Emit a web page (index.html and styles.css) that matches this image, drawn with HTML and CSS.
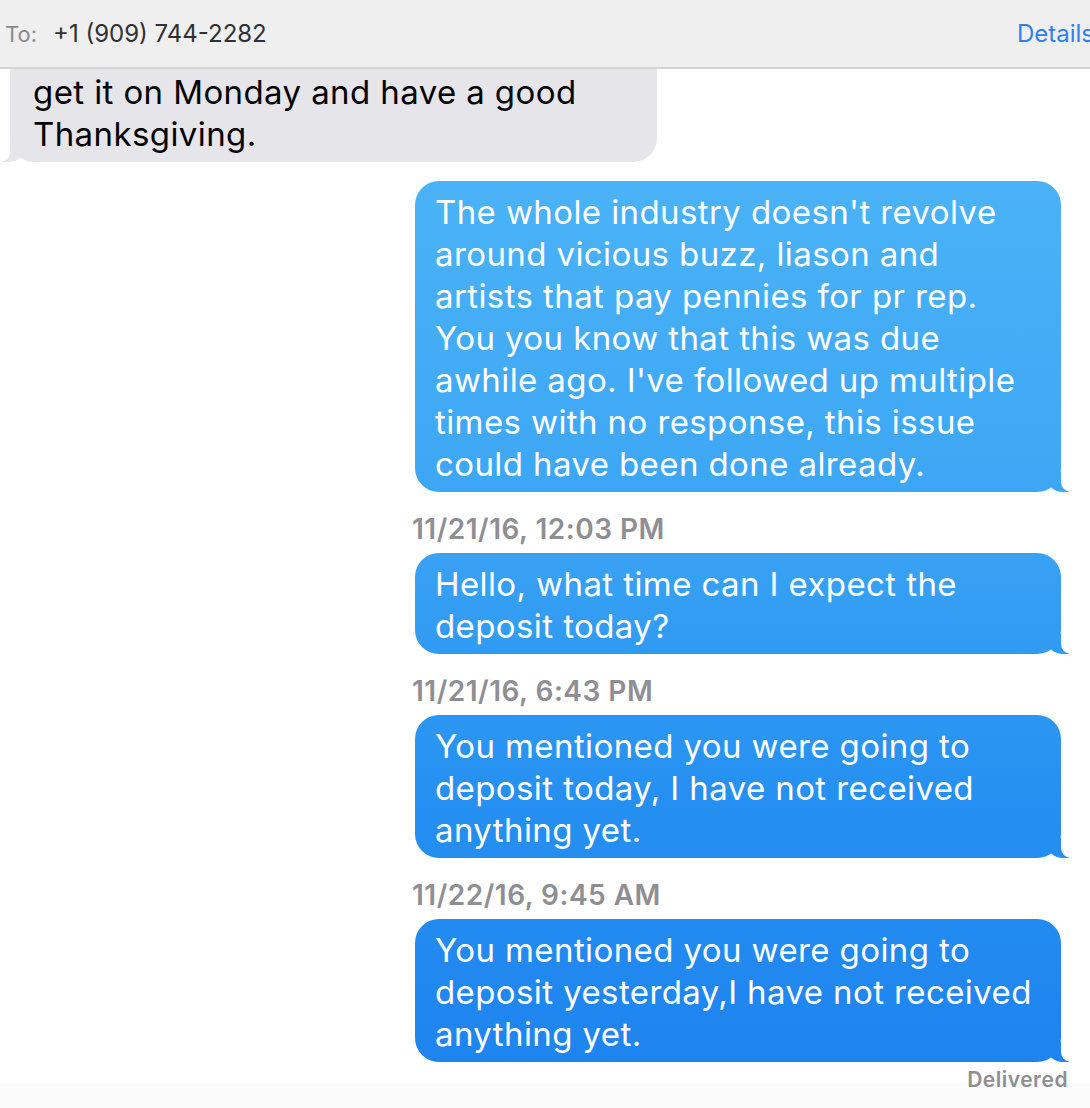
FILE: index.html
```html
<!DOCTYPE html>
<html lang="en">
<head>
    <meta charset="UTF-8">
    <meta name="viewport" content="width=device-width, initial-scale=1.0">
    <title>Messages</title>
    <link rel="stylesheet" href="styles.css">
</head>
<body>
    <div class="header">
        <span class="to-label">To:</span>
        <span class="to-number">+1 (909) 744-2282</span>
        <span class="details">Details</span>
    </div>

    <div class="thread">
        <div class="bubble received">
            get it on Monday and have a good<br>Thanksgiving.
        </div>

        <div class="bubble sent first">
            The whole industry doesn't revolve<br>around vicious buzz, liason and<br>artists that pay pennies for pr rep.<br>You you know that this was due<br>awhile ago. I've followed up multiple<br>times with no response, this issue<br>could have been done already.
        </div>

        <div class="stamp">11/21/16, 12:03 PM</div>
        <div class="bubble sent">
            Hello, what time can I expect the<br>deposit today?
        </div>

        <div class="stamp">11/21/16, 6:43 PM</div>
        <div class="bubble sent">
            You mentioned you were going to<br>deposit today, I have not received<br>anything yet.
        </div>

        <div class="stamp">11/22/16, 9:45 AM</div>
        <div class="bubble sent">
            You mentioned you were going to<br>deposit yesterday,I have not received<br>anything yet.
        </div>

        <div class="delivered">Delivered</div>
    </div>

    <div class="footer-fade"></div>
</body>
</html>
```

FILE: styles.css
```css
html, body {
    margin: 0;
    padding: 0;
}
body {
    font-family: Inter, Roboto, "Liberation Sans", sans-serif;
    background: #ffffff;
    width: 1090px;
    height: 1108px;
    overflow: hidden;
    position: relative;
}
.header {
    position: relative;
    z-index: 2;
    height: 67px;
    background: #efeff0;
    border-bottom: 2px solid #d4d4d6;
    display: flex;
    align-items: center;
    font-size: 24px;
    padding-left: 5px;
    white-space: nowrap;
}
.to-label {
    color: #8a8a8e;
    font-size: 22px;
}
.to-number {
    color: #303033;
    margin-left: 16px;
}
.details {
    color: #2f7fea;
    margin-left: auto;
    margin-right: -4px;
}
.thread {
    display: flex;
    flex-direction: column;
    margin-top: -8px;
}
.bubble {
    position: relative;
    font-size: 33px;
    letter-spacing: 0.4px;
    line-height: 42px;
    padding: 10px 10px 7px 20px;
    border-radius: 24px;
    box-sizing: border-box;
    white-space: nowrap;
}
.received {
    background: #e5e5ea;
    color: #000;
    width: 647px;
    margin-left: 10px;
    margin-top: -32px;
    padding-top: 42px;
    padding-left: 23px;
}
.received::before {
    content: "";
    position: absolute;
    bottom: 0;
    left: -8px;
    width: 22px;
    height: 20px;
    background: #e5e5ea;
    border-bottom-right-radius: 16px 14px;
}
.received::after {
    content: "";
    position: absolute;
    bottom: 0;
    left: -14px;
    width: 14px;
    height: 20px;
    background: #fff;
    border-bottom-right-radius: 10px;
}
.sent {
    color: #fff;
    width: 646px;
    margin-left: 415px;
    background: linear-gradient(180deg, #52b9f7 0px, #3ea7f5 480px, #2590f1 800px, #1d82ef 1108px) fixed;
}
.sent::before {
    content: "";
    position: absolute;
    bottom: 0;
    right: -8px;
    width: 22px;
    height: 20px;
    background: linear-gradient(180deg, #52b9f7 0px, #3ea7f5 480px, #2590f1 800px, #1d82ef 1108px) fixed;
    border-bottom-left-radius: 16px 14px;
}
.sent::after {
    content: "";
    position: absolute;
    bottom: 0;
    right: -14px;
    width: 14px;
    height: 20px;
    background: #fff;
    border-bottom-left-radius: 10px;
}
.sent.first {
    margin-top: 19px;
}
.stamp {
    margin: 20px 0 7px 412px;
    font-size: 28px;
    letter-spacing: 0.5px;
    line-height: 34px;
    font-weight: 600;
    color: #8e8e93;
}
.delivered {
    align-self: flex-end;
    margin: 5px 22px 0 0;
    font-size: 21px;
    letter-spacing: 0.5px;
    line-height: 26px;
    font-weight: 600;
    color: #8e8e93;
}
.footer-fade {
    position: absolute;
    left: 0;
    right: 0;
    bottom: 0;
    height: 25px;
    background: #fbfbfb;
    z-index: -1;
}
```
